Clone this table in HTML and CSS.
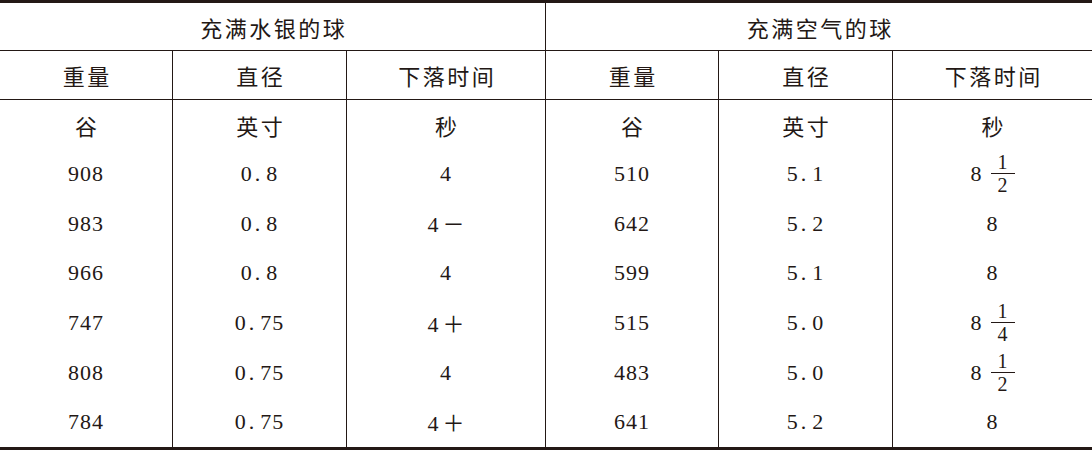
FILE: index.html
```html
<!DOCTYPE html>
<html lang="zh">
<head>
<meta charset="utf-8">
<title>下落时间</title>
<link rel="stylesheet" href="styles.css">
</head>
<body>
<table class="data">
  <colgroup>
    <col class="c-w"><col class="c-d"><col class="c-t">
    <col class="c-w"><col class="c-d"><col class="c-t">
  </colgroup>
  <thead>
    <tr class="group">
      <th colspan="3" class="split">充满水银的球</th>
      <th colspan="3">充满空气的球</th>
    </tr>
    <tr class="head">
      <th>重量</th><th>直径</th><th>下落时间</th>
      <th>重量</th><th>直径</th><th>下落时间</th>
    </tr>
  </thead>
  <tbody>
    <tr class="unit">
      <td>谷</td><td>英寸</td><td>秒</td>
      <td>谷</td><td>英寸</td><td>秒</td>
    </tr>
    <tr>
      <td>908</td><td>0<span class="pt">.</span>8</td><td>4</td>
      <td>510</td><td>5<span class="pt">.</span>1</td>
      <td><span class="mixed">8<span class="frac"><span class="num">1</span><span class="den">2</span></span></span></td>
    </tr>
    <tr>
      <td>983</td><td>0<span class="pt">.</span>8</td><td>4<span class="sign">－</span></td>
      <td>642</td><td>5<span class="pt">.</span>2</td><td>8</td>
    </tr>
    <tr>
      <td>966</td><td>0<span class="pt">.</span>8</td><td>4</td>
      <td>599</td><td>5<span class="pt">.</span>1</td><td>8</td>
    </tr>
    <tr>
      <td>747</td><td>0<span class="pt">.</span>75</td><td>4<span class="sign">＋</span></td>
      <td>515</td><td>5<span class="pt">.</span>0</td>
      <td><span class="mixed">8<span class="frac"><span class="num">1</span><span class="den">4</span></span></span></td>
    </tr>
    <tr>
      <td>808</td><td>0<span class="pt">.</span>75</td><td>4</td>
      <td>483</td><td>5<span class="pt">.</span>0</td>
      <td><span class="mixed">8<span class="frac"><span class="num">1</span><span class="den">2</span></span></span></td>
    </tr>
    <tr>
      <td>784</td><td>0<span class="pt">.</span>75</td><td>4<span class="sign">＋</span></td>
      <td>641</td><td>5<span class="pt">.</span>2</td><td>8</td>
    </tr>
  </tbody>
</table>
</body>
</html>
```

FILE: styles.css
```css
html, body {
  margin: 0;
  padding: 0;
  background: #ffffff;
}

.data {
  width: 1092px;
  table-layout: fixed;
  border-collapse: separate;
  border-spacing: 0;
  border-top: 3px solid #231815;
  border-bottom: 3px solid #231815;
  color: #231815;
}

.c-w { width: 173px; }
.c-d { width: 174px; }
.c-t { width: 199px; }

.data th,
.data td {
  box-sizing: border-box;
  padding: 0;
  text-align: center;
  vertical-align: middle;
  font-weight: normal;
}

.data th,
.unit td {
  font-family: "Noto Sans CJK SC", sans-serif;
  font-size: 22px;
  line-height: 26px;
  letter-spacing: 2.5px;
  text-indent: 2.5px;
}

.group th {
  height: 48px;
  border-bottom: 1px solid #231815;
}

.group .split {
  border-right: 1px solid #231815;
}

.head th {
  height: 49px;
  border-bottom: 1px solid #231815;
  border-right: 1px solid #231815;
}

.head th:last-child,
tbody td:last-child {
  border-right: none;
}

tbody td {
  height: 49.57px;
  border-right: 1px solid #231815;
  font-family: "Liberation Serif", "Noto Sans CJK SC", serif;
  font-size: 22px;
  line-height: 26px;
  letter-spacing: 1px;
}

.pt {
  margin-left: 2px;
  margin-right: 5px;
}

.sign {
  font-family: "Noto Sans CJK SC", sans-serif;
  margin-left: 3px;
  letter-spacing: 0;
}

.mixed {
  display: inline-flex;
  align-items: center;
  gap: 9px;
  vertical-align: middle;
  letter-spacing: 0;
}

.frac {
  display: inline-flex;
  flex-direction: column;
  align-items: center;
  width: 24px;
  font-size: 20px;
}

.num,
.den {
  display: block;
  width: 100%;
  letter-spacing: 0;
}

.num {
  line-height: 22px;
  border-bottom: 1px solid #231815;
}

.den {
  line-height: 23px;
}
```
